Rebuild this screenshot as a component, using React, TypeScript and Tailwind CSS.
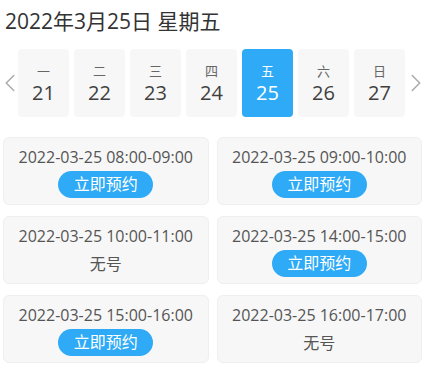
import { ChevronLeft, ChevronRight } from 'lucide-react';

const DAYS = [
  { week: '一', day: 21 },
  { week: '二', day: 22 },
  { week: '三', day: 23 },
  { week: '四', day: 24 },
  { week: '五', day: 25 },
  { week: '六', day: 26 },
  { week: '日', day: 27 },
];

const SLOTS = [
  { time: '2022-03-25 08:00-09:00', open: true },
  { time: '2022-03-25 09:00-10:00', open: true },
  { time: '2022-03-25 10:00-11:00', open: false },
  { time: '2022-03-25 14:00-15:00', open: true },
  { time: '2022-03-25 15:00-16:00', open: true },
  { time: '2022-03-25 16:00-17:00', open: false },
];

export default function App() {
  const selected = 25;

  return (
    <div
      className="w-[437px] h-[389px] bg-white text-[#444]"
      style={{ fontFamily: '"Open Sans", "Noto Sans CJK SC", sans-serif' }}
    >
      {/* 标题 */}
      <div className="pl-[5px] pt-[6px] h-[44px] text-[21px] leading-[30px] text-[#333]">
        2022年3月25日 星期五
      </div>

      {/* 日期选择 */}
      <div className="flex items-center h-[68px] mt-[5px]">
        <div className="w-[18px] flex justify-center items-center pl-[2px]">
          <ChevronLeft className="w-[30px] h-[30px] shrink-0 text-[#aaa]" strokeWidth={1.2} />
        </div>
        <div className="flex gap-[5px]">
          {DAYS.map((d) => {
            const active = d.day === selected;
            return (
              <div
                key={d.day}
                className={
                  active
                    ? 'w-[51px] h-[68px] rounded-[4px] bg-[#2eaaf6] text-white flex flex-col items-center justify-center pt-[2px]'
                    : 'w-[51px] h-[68px] rounded-[4px] bg-[#f7f7f7] text-[#3f3f3f] flex flex-col items-center justify-center pt-[2px]'
                }
              >
                <span className={active ? 'text-[13px] leading-[16px] text-white' : 'text-[13px] leading-[16px] text-[#666]'}>
                  {d.week}
                </span>
                <span className="text-[20px] leading-[24px] mt-[2px]">{d.day}</span>
              </div>
            );
          })}
        </div>
        <div className="w-[18px] flex justify-center items-center pl-[4px]">
          <ChevronRight className="w-[30px] h-[30px] shrink-0 text-[#aaa]" strokeWidth={1.2} />
        </div>
      </div>

      {/* 号源列表 */}
      <div className="grid grid-cols-2 gap-x-[8px] gap-y-[11px] pl-[3px] w-[422px] mt-[20px]">
        {SLOTS.map((s, i) => (
          <div
            key={i}
            className="h-[68px] rounded-[6px] bg-[#f7f7f7] border border-[#efefef] flex flex-col items-center pt-[8px]"
          >
            <div className="text-[16px] leading-[22px] text-[#555]">{s.time}</div>
            {s.open ? (
              <div className="mt-[3px] w-[95px] h-[27px] rounded-full bg-[#2eaaf6] text-white text-[16px] leading-[27px] text-center">
                立即预约
              </div>
            ) : (
              <div className="mt-[6px] text-[16px] leading-[22px] text-[#555]">无号</div>
            )}
          </div>
        ))}
      </div>
    </div>
  );
}
